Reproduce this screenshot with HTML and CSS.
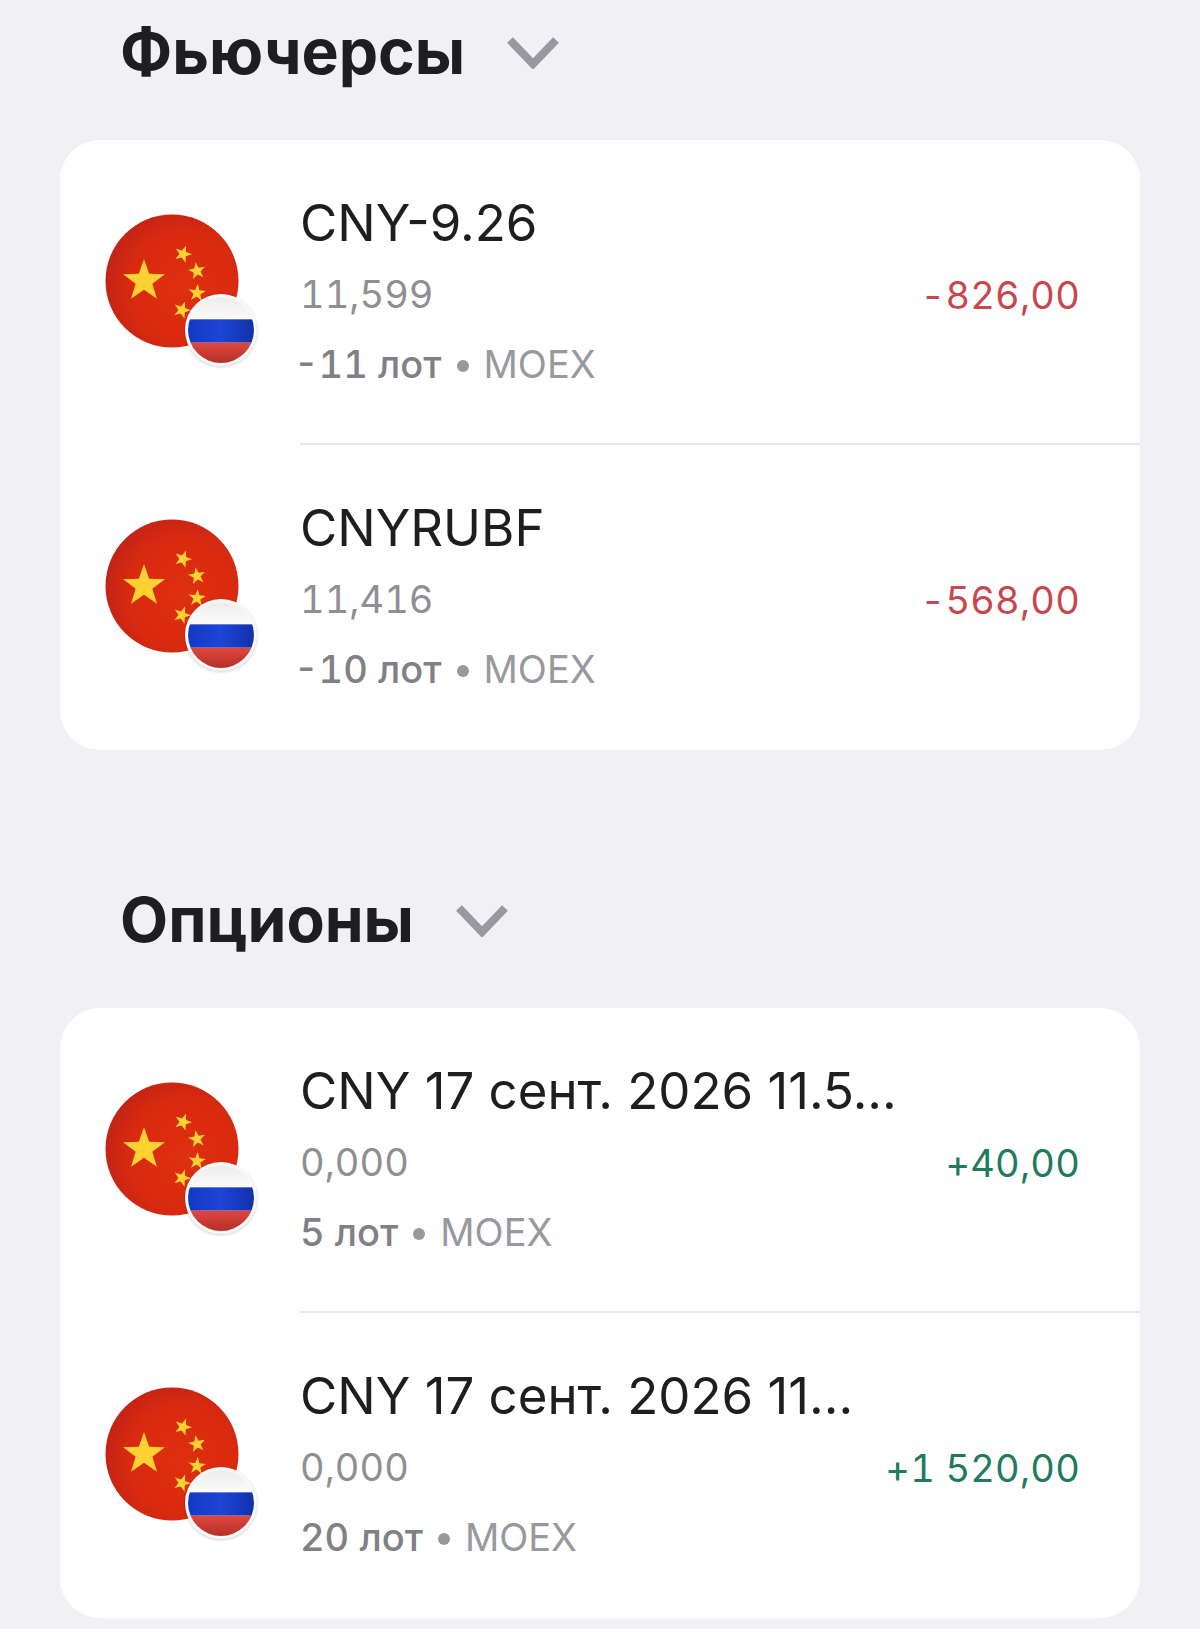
FILE: index.html
```html
<!DOCTYPE html>
<html lang="ru">
<head>
    <meta charset="UTF-8">
    <title>Фьючерсы и опционы</title>
    <link rel="stylesheet" href="styles.css">
</head>
<body>
    <svg class="defs" width="0" height="0">
        <defs>
            <radialGradient id="redShade" cx="0.6" cy="0.55" r="0.6">
                <stop offset="0" stop-color="#de2f0f"/>
                <stop offset="0.7" stop-color="#d92a10"/>
                <stop offset="1" stop-color="#c42415"/>
            </radialGradient>
            <linearGradient id="whiteShade" x1="0" y1="0" x2="0" y2="1">
                <stop offset="0" stop-color="#ececec"/>
                <stop offset="1" stop-color="#fcfcfc"/>
            </linearGradient>
            <linearGradient id="blueShade" x1="0" y1="0" x2="1" y2="0">
                <stop offset="0" stop-color="#1338c4"/>
                <stop offset="0.5" stop-color="#1c46d6"/>
                <stop offset="1" stop-color="#1230a8"/>
            </linearGradient>
            <linearGradient id="ruRed" x1="0" y1="0" x2="0" y2="1">
                <stop offset="0" stop-color="#e0473e"/>
                <stop offset="1" stop-color="#b33029"/>
            </linearGradient>
            <path id="star" d="M0 -10 L2.35 -3.24 L9.51 -3.09 L3.8 1.24 L5.88 8.09 L0 4 L-5.88 8.09 L-3.8 1.24 L-9.51 -3.09 L-2.35 -3.24 Z"/>
            <symbol id="cn" viewBox="0 0 134 134">
                <circle cx="67" cy="67" r="66.5" fill="url(#redShade)"/>
                <g fill="#fbd232">
                    <use href="#star" transform="translate(39 67) scale(2.2)"/>
                    <use href="#star" transform="translate(78 40) rotate(20) scale(0.9)"/>
                    <use href="#star" transform="translate(92 57) rotate(-10) scale(0.9)"/>
                    <use href="#star" transform="translate(92 79) rotate(5) scale(0.9)"/>
                    <use href="#star" transform="translate(77 96) rotate(20) scale(0.9)"/>
                </g>
            </symbol>
            <symbol id="ru" viewBox="0 0 65 65">
                <clipPath id="ruClip"><circle cx="32.5" cy="32.5" r="32.5"/></clipPath>
                <g clip-path="url(#ruClip)">
                    <rect width="65" height="23" fill="url(#whiteShade)"/>
                    <rect y="22" width="65" height="23" fill="url(#blueShade)"/>
                    <rect y="45" width="65" height="20" fill="url(#ruRed)"/>
                </g>
            </symbol>
        </defs>
    </svg>

    <section class="group">
        <h2 class="group-title">Фьючерсы
            <svg class="chevron" viewBox="0 0 52 32"><path d="M3 3 L26 27 L49 3" fill="none" stroke="#98989f" stroke-width="8"/></svg>
        </h2>
        <div class="card">
            <div class="row">
                <div class="avatar">
                    <svg class="flag"><use href="#cn"/></svg>
                    <span class="badge"><svg class="badge-flag"><use href="#ru"/></svg></span>
                </div>
                <div class="info">
                    <div class="name">CNY-9.26</div>
                    <div class="price">11,599</div>
                    <div class="meta"><b class="short">-11 лот</b><i class="dot"></i>MOEX</div>
                </div>
                <div class="amount loss">-826,00</div>
            </div>
            <div class="row">
                <div class="avatar">
                    <svg class="flag"><use href="#cn"/></svg>
                    <span class="badge"><svg class="badge-flag"><use href="#ru"/></svg></span>
                </div>
                <div class="info">
                    <div class="name">CNYRUBF</div>
                    <div class="price">11,416</div>
                    <div class="meta"><b class="short">-10 лот</b><i class="dot"></i>MOEX</div>
                </div>
                <div class="amount loss">-568,00</div>
            </div>
        </div>
    </section>

    <section class="group">
        <h2 class="group-title">Опционы
            <svg class="chevron" viewBox="0 0 52 32"><path d="M3 3 L26 27 L49 3" fill="none" stroke="#98989f" stroke-width="8"/></svg>
        </h2>
        <div class="card">
            <div class="row">
                <div class="avatar">
                    <svg class="flag"><use href="#cn"/></svg>
                    <span class="badge"><svg class="badge-flag"><use href="#ru"/></svg></span>
                </div>
                <div class="info">
                    <div class="name">CNY 17 сент. 2026 11.5...</div>
                    <div class="price">0,000</div>
                    <div class="meta"><b>5 лот</b><i class="dot"></i>MOEX</div>
                </div>
                <div class="amount gain">+40,00</div>
            </div>
            <div class="row">
                <div class="avatar">
                    <svg class="flag"><use href="#cn"/></svg>
                    <span class="badge"><svg class="badge-flag"><use href="#ru"/></svg></span>
                </div>
                <div class="info">
                    <div class="name">CNY 17 сент. 2026 11...</div>
                    <div class="price">0,000</div>
                    <div class="meta"><b>20 лот</b><i class="dot"></i>MOEX</div>
                </div>
                <div class="amount gain">+1 520,00</div>
            </div>
        </div>
    </section>
</body>
</html>
```

FILE: styles.css
```css
body {
    font-family: Inter, "Liberation Sans", sans-serif;
    background-color: #f0f0f5;
    margin: 0;
    padding: 0;
    overflow: hidden;
    height: 1629px;
    color: #1e1e20;
}

.defs {
    display: block;
    height: 0;
}

.group {
    padding: 0 60px;
}

.group + .group {
    margin-top: 118px;
}

.group-title {
    display: flex;
    align-items: center;
    gap: 42px;
    margin: 0 0 32px;
    padding: 0 0 6px 60px;
    height: 102px;
    font-size: 62.5px;
    font-weight: 700;
    line-height: 1;
}

.chevron {
    width: 52px;
    height: 32px;
    margin-top: 4px;
}

.card {
    background-color: #fff;
    border-radius: 40px;
    overflow: hidden;
}

.row {
    position: relative;
    display: flex;
    align-items: center;
    height: 305px;
    padding: 0 60px 0 45px;
}

.row + .row::before {
    content: "";
    position: absolute;
    top: -2px;
    left: 240px;
    right: 0;
    height: 2px;
    background-color: #e7e7ea;
}

.avatar {
    position: relative;
    flex: none;
    width: 134px;
    height: 134px;
    margin-right: 61px;
    margin-bottom: 24px;
}

.flag {
    display: block;
    width: 134px;
    height: 134px;
}

.badge {
    position: absolute;
    left: 80px;
    top: 80px;
    width: 66px;
    height: 66px;
    border: 3px solid #f8f8f8;
    border-radius: 50%;
    background-color: #fff;
    box-shadow: 0 1px 3px rgba(0, 0, 0, 0.2);
}

.badge-flag {
    display: block;
    width: 66px;
    height: 66px;
}

.info {
    flex: 1;
    min-width: 0;
    padding-bottom: 6px;
}

.name {
    font-size: 51px;
    line-height: 60px;
    color: #1e1e20;
    white-space: nowrap;
}

.price {
    margin-top: 18px;
    font-size: 38px;
    line-height: 46px;
    font-variant-numeric: tabular-nums;
    color: #8e8e93;
}

.meta {
    display: flex;
    align-items: center;
    margin-top: 24px;
    font-size: 38px;
    line-height: 46px;
    font-variant-numeric: tabular-nums;
    color: #98989f;
}

.meta b {
    font-weight: 500;
    color: #808086;
}

/* tabular hyphen has extra room on the left */
.meta b.short {
    margin-left: -6px;
}

.dot {
    width: 12px;
    height: 12px;
    margin: 4px 15px 0;
    border-radius: 50%;
    background-color: #98989f;
}

.amount {
    flex: none;
    margin-top: 4px;
    font-size: 38px;
    letter-spacing: 0.2px;
    font-variant-numeric: tabular-nums;
    white-space: nowrap;
}

.loss {
    color: #c9474c;
}

.gain {
    color: #217a5c;
}
```
